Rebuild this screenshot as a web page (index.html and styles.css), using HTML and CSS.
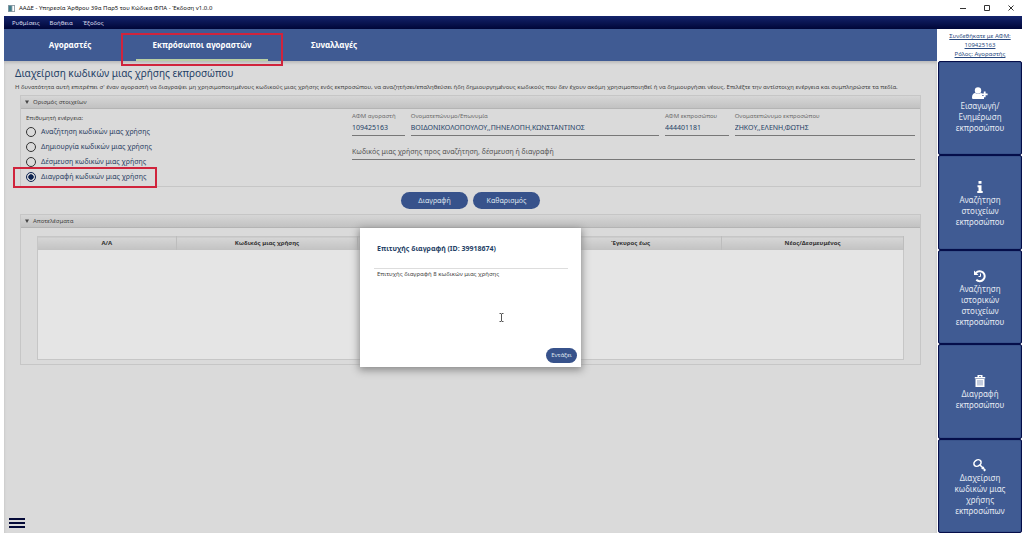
FILE: index.html
```html
<!DOCTYPE html>
<html lang="el">
<head>
<meta charset="utf-8">
<meta name="viewport" content="width=device-width, initial-scale=1">
<title>ΑΑΔΕ - Υπηρεσία Άρθρου 39α Παρ5 του Κώδικα ΦΠΑ</title>
<link rel="stylesheet" href="styles.css">
</head>
<body>
<div class="window">
  <header class="titlebar">
    <svg class="app-icon" viewBox="0 0 8 8" aria-hidden="true"><path fill="#8a9aa4" d="M0 0h8v8H0z"/><path fill="#fff" d="M5 1h2v6H5z"/><path fill="#3f7f8c" d="M1 1h3v6H1z"/></svg>
    <span class="window-title">ΑΑΔΕ - Υπηρεσία Άρθρου 39α Παρ5 του Κώδικα ΦΠΑ - Έκδοση v1.0.0</span>
    <div class="window-controls">
      <button class="window-button" aria-label="Ελαχιστοποίηση"><svg viewBox="0 0 6 6"><path d="M0 3.5h6"/></svg></button>
      <button class="window-button" aria-label="Μεγιστοποίηση"><svg viewBox="0 0 6 6"><path d="M.5.5h5v5h-5z"/></svg></button>
      <button class="window-button" aria-label="Κλείσιμο"><svg viewBox="0 0 6 6"><path d="M.5.5l5 5m0-5l-5 5"/></svg></button>
    </div>
  </header>
  <nav class="menubar">
    <button class="menu-item">Ρυθμίσεις</button>
    <button class="menu-item">Βοήθεια</button>
    <button class="menu-item">Έξοδος</button>
  </nav>
  <div class="workspace">
    <div class="content">
      <nav class="tabs">
        <button class="tab">Αγοραστές</button>
        <button class="tab tab-active">Εκπρόσωποι αγοραστών<span class="highlight highlight-tab"></span></button>
        <button class="tab">Συναλλαγές</button>
      </nav>
      <main class="page">
        <h1 class="page-title">Διαχείριση κωδικών μιας χρήσης εκπροσώπου</h1>
        <p class="page-intro">Η δυνατότητα αυτή επιτρέπει σ' έναν αγοραστή να διαγραψει μη χρησιμοποιημένους κωδικούς μιας χρήσης ενός εκπροσώπου, να αναζητήσει/επαληθεύσει ήδη δημιουργημένους κωδικούς που δεν έχουν ακόμη χρησιμοποιηθεί ή να δημιουργήσει νέους. Επιλέξτε την αντίστοιχη ενέργεια και συμπληρώστε τα πεδία.</p>
        <section class="panel">
          <h2 class="panel-title"><svg class="caret" viewBox="0 0 4 4" aria-hidden="true"><path d="M0 .5h4L2 4z"/></svg>Ορισμός στοιχείων</h2>
          <form class="criteria">
            <fieldset class="actions">
              <legend class="actions-title">Επιθυμητή ενέργεια:</legend>
              <label class="option"><input class="radio" type="radio" name="action">Αναζήτηση κωδικών μιας χρήσης</label>
              <label class="option"><input class="radio" type="radio" name="action">Δημιουργία κωδικών μιας χρήσης</label>
              <label class="option"><input class="radio" type="radio" name="action">Δέσμευση κωδικών μιας χρήσης</label>
              <label class="option"><input class="radio" type="radio" name="action" checked>Διαγραφή κωδικών μιας χρήσης<span class="highlight highlight-option"></span></label>
            </fieldset>
            <div class="fields">
              <label class="field">ΑΦΜ αγοραστή<input class="field-input" type="text" value="109425163"></label>
              <label class="field">Ονοματεπώνυμο/Επωνυμία<input class="field-input" type="text" value="ΒΟΙΔΟΝΙΚΟΛΟΠΟΥΛΟΥ,,ΠΗΝΕΛΟΠΗ,ΚΩΝΣΤΑΝΤΙΝΟΣ"></label>
              <label class="field">ΑΦΜ εκπροσώπου<input class="field-input" type="text" value="444401181"></label>
              <label class="field">Ονοματεπώνυμο εκπροσώπου<input class="field-input" type="text" value="ΖΗΚΟΥ,,ΕΛΕΝΗ,ΦΩΤΗΣ"></label>
              <input class="field-input field-code" type="text" placeholder="Κωδικός μιας χρήσης προς αναζήτηση, δέσμευση ή διαγραφή" aria-label="Κωδικός μιας χρήσης">
            </div>
          </form>
        </section>
        <div class="commands">
          <button class="pill">Διαγραφή</button>
          <button class="pill">Καθαρισμός</button>
        </div>
        <section class="panel">
          <h2 class="panel-title"><svg class="caret" viewBox="0 0 4 4" aria-hidden="true"><path d="M0 .5h4L2 4z"/></svg>Αποτελέσματα</h2>
          <div class="results">
            <table class="results-table">
              <thead><tr><th class="col-index">Α/Α</th><th>Κωδικός μιας χρήσης</th><th></th><th>Έγκυρος έως</th><th>Νέος/Δεσμευμένος</th></tr></thead>
              <tbody><tr><td colspan="5"></td></tr></tbody>
            </table>
          </div>
        </section>
        <button class="drawer-toggle" aria-label="Μενού"><svg viewBox="0 0 16 12"><path d="M0 2h16M0 6h16M0 10h16"/></svg></button>
        <div class="dialog" role="dialog" aria-labelledby="dialog-title">
          <h2 class="dialog-title" id="dialog-title">Επιτυχής διαγραφή (ID: 39918674)</h2>
          <p class="dialog-text">Επιτυχής διαγραφή 8 κωδικών μιας χρήσης</p>
          <svg class="text-cursor" viewBox="0 0 5 9" aria-hidden="true"><path d="M.5.5h1.500l.5.5.5-.5h1.500M2.500 1v7M.5 8.500h1.500l.5-.5.5.5h1.500"/></svg>
          <button class="pill dialog-ok">Εντάξει</button>
        </div>
      </main>
    </div>
    <aside class="sidebar">
      <a class="account" href="#account">Συνδεθήκατε με ΑΦΜ: 109425163<br>Ρόλος: Αγοραστής</a>
      <button class="side-button"><svg class="side-icon" viewBox="0 0 16 14"><circle cx="6" cy="4.500" r="3.200"/><path d="M0 11.500c0-3 1.500-4.500 3.200-4.500 1.800 1.400 3.800 1.400 5.600 0 .5 0 1 .2 1.200.5v2.500h2V13H1.500C.5 13 0 12.500 0 11.500z"/><path d="M11.800 5.500h1.800v2h2v1.800h-2v2h-1.800v-2h-2V7.500h2z"/></svg>Εισαγωγή/ Ενημέρωση εκπροσώπου</button>
      <button class="side-button"><svg class="side-icon" viewBox="0 0 16 14"><path d="M6.500 1h3v2.700h-3zM5.500 5.300h4v5.700h1.200v2H5.300v-2h1.200V7.300h-1z"/></svg>Αναζήτηση στοιχείων εκπροσώπου</button>
      <button class="side-button"><svg class="side-icon" viewBox="0 0 16 14"><path class="line" d="M4 3.800A5 5 0 1 1 4.300 10.800"/><path d="M2 1.500v4.500h4.500z"/><path class="line thin" d="M8.500 4.500v3H6.500"/></svg>Αναζήτηση ιστορικών στοιχείων εκπροσώπου</button>
      <button class="side-button"><svg class="side-icon" viewBox="0 0 16 14"><path d="M5.500 3V1h5v2h2.700v1.500H2.800V3zM7 3h2v-.8H7zM3.500 5h9v8h-9z"/><path class="slots" d="M6 6v5.500M8 6v5.500M10 6v5.500"/></svg>Διαγραφή εκπροσώπου</button>
      <button class="side-button"><svg class="side-icon" viewBox="0 0 16 14"><ellipse class="line key" cx="5.500" cy="5" rx="3.800" ry="3" transform="rotate(-35 5.500 5)"/><path class="line key" d="M8 7l5.500 5.500M9.800 11l2-2M11.900 13l1.500-1.500"/></svg>Διαχείριση κωδικών μιας χρήσης εκπροσώπων</button>
    </aside>
  </div>
</div>
</body>
</html>
```
FILE: styles.css
```css
* {
  box-sizing: border-box;
}

body {
  margin: 0;
  background: #fff;
  color: #444;
  font-family: "Noto Sans", "Open Sans", sans-serif;
  font-size: 6px;
  line-height: 10px;
}

button,
input {
  padding: 0;
  border: 0;
  background: none;
  color: inherit;
  font: inherit;
}

h1,
h2,
p {
  margin: 0;
}

.window {
  display: flex;
  flex-direction: column;
  min-height: 100vh;
  padding: 0 1px 0 4px;
}

.titlebar {
  display: flex;
  align-items: center;
  height: 16px;
  padding: 0 8px 0 4px;
  color: #111;
}

.app-icon {
  width: 7px;
  height: 7px;
  margin-right: 4px;
}

.window-controls {
  display: flex;
  gap: 18px;
  margin-left: auto;
}

.window-button {
  display: flex;
  width: 6px;
}

.window-button svg {
  width: 6px;
  height: 6px;
  fill: none;
  stroke: #333;
  stroke-width: 1;
}

.menubar {
  display: flex;
  gap: 10px;
  height: 13px;
  padding-left: 8px;
  background: linear-gradient(#14246c, #000638);
  color: #dde;
}

.workspace {
  display: flex;
  flex: 1;
}

.content {
  display: flex;
  flex: 1;
  flex-direction: column;
  min-width: 0;
}

.tabs {
  display: flex;
  height: 32px;
  background: #405b93;
}

.tab {
  position: relative;
  width: 132px;
  padding-top: 2px;
  border-bottom: 2px solid transparent;
  color: #fff;
  font-size: 8px;
  font-weight: 700;
}

.tab-active {
  border-bottom-color: #b9cfa4;
}

.highlight {
  position: absolute;
  border: 2px solid #d0243c;
  pointer-events: none;
}

.highlight-tab {
  inset: 4px -15px -7px;
  z-index: 1;
}

.page {
  position: relative;
  display: flex;
  flex: 1;
  flex-direction: column;
  padding: 4px 16px 4px 11px;
  background: #dadada;
  box-shadow: inset 0 2px 3px #bbb;
}

.page-title {
  color: #1f3f66;
  font-size: 10px;
  font-weight: 400;
  line-height: 16px;
}

.page-intro {
  margin-bottom: 2px;
  line-height: 12px;
  white-space: nowrap;
}

.panel {
  margin-left: 5px;
  border: 1px solid #c6c6c6;
}

.panel-title {
  display: flex;
  align-items: center;
  gap: 4px;
  height: 13px;
  padding-left: 4px;
  border-bottom: 1px solid #b4b4b4;
  background: linear-gradient(#d6d6d6, #c2c2c2);
  font-size: 6px;
  font-weight: 400;
}

.caret {
  width: 4px;
  height: 4px;
  fill: #444;
}

.criteria {
  display: grid;
  grid-template-columns: 326fr 563fr;
  padding: 2px 5px 2px 5px;
}

.actions {
  margin: 0;
  padding: 1px 0 0;
  border: 0;
}

.actions-title {
  float: left;
  width: 100%;
  padding: 0;
  line-height: 12px;
}

.option {
  position: relative;
  display: flex;
  clear: both;
  align-items: center;
  gap: 5px;
  width: max-content;
  height: 15px;
  color: #2b4163;
  font-size: 7px;
}

.radio {
  width: 10px;
  height: 10px;
  margin: 0;
  border: 1px solid #333;
  border-radius: 50%;
  appearance: none;
}

.radio:checked {
  border-color: #0d2350;
  background: radial-gradient(circle closest-side, #0d2350 60%, transparent 75%);
}

.highlight-option {
  inset: -2px -11px -4px -13px;
}

.fields {
  display: grid;
  grid-template-columns: 53fr 249fr 64fr 181fr;
  gap: 9px 6px;
  align-content: start;
}

.field {
  display: flex;
  flex-direction: column;
  min-width: 0;
  color: #6c6c6c;
}

.field-input {
  width: 100%;
  height: 15px;
  padding-bottom: 1px;
  border-bottom: 1px solid #777;
  color: #1f3f66;
  font-size: 7px;
}

.field-code {
  grid-column: 1 / -1;
}

.field-code::placeholder {
  color: #555;
  opacity: 1;
}

.commands {
  display: flex;
  justify-content: center;
  gap: 5px;
  padding: 5px 0 5px 5px;
}

.pill {
  width: 67px;
  height: 17px;
  border-radius: 9px;
  background: #37528b;
  color: #dfe4ee;
  font-size: 7px;
}

.results {
  padding: 8px 16px 4px;
}

.results-table {
  width: 100%;
  border: 1px solid #c6c6c6;
  border-collapse: collapse;
  table-layout: fixed;
  background: #e5e5e5;
}

.results-table th {
  height: 13px;
  padding: 0;
  border-right: 1px solid #bdbdbd;
  background: linear-gradient(#d6d6d6, #c2c2c2);
  color: #333;
}

.results-table td {
  height: 110px;
  padding: 0;
}

.results-table .col-index {
  width: 16%;
}

.drawer-toggle {
  align-self: flex-start;
  width: 16px;
  height: 12px;
  margin: auto 0 0 -6px;
}

.drawer-toggle svg {
  display: block;
  width: 16px;
  height: 12px;
  stroke: #050a38;
  stroke-width: 2;
}

.dialog {
  position: absolute;
  inset: 0;
  display: flex;
  flex-direction: column;
  width: 221px;
  height: 139px;
  margin: auto;
  padding: 14px 4px 4px 14px;
  background: #fff;
  box-shadow: 0 2px 8px 1px #888;
}

.dialog-title {
  margin-right: 9px;
  padding: 2px 3px 14px;
  border-bottom: 1px solid #ddd;
  color: #1f3f66;
  font-size: 7px;
}

.dialog-text {
  padding-left: 3px;
}

.text-cursor {
  position: absolute;
  top: 85px;
  left: 139px;
  width: 5px;
  height: 9px;
  fill: none;
  stroke: #555;
}

.dialog-ok {
  align-self: flex-end;
  width: 31px;
  height: 15px;
  margin-top: auto;
  font-size: 6px;
}

.sidebar {
  display: flex;
  flex-direction: column;
  width: 85px;
  border-left: 1px solid #fff;
}

.account {
  height: 32px;
  padding: 3px 8px 0;
  color: #2a4a80;
  line-height: 9px;
  text-align: center;
}

.side-button {
  display: flex;
  flex: 1;
  flex-direction: column;
  align-items: center;
  justify-content: center;
  padding: 2px 14px 0;
  border: 1px solid #050e4a;
  border-radius: 2px;
  background: #405b93;
  box-shadow: inset 0 0 1px #050e4a;
  color: #e4e9f2;
  font-size: 8px;
  line-height: 11px;
}

.side-icon {
  width: 16px;
  height: 14px;
  fill: #fff;
}

.line {
  fill: none;
  stroke: #fff;
  stroke-width: 2;
}

.thin {
  stroke-width: 1;
}

.key {
  stroke-width: 1.6;
}

.slots {
  stroke: #8799bd;
  stroke-width: 1;
}
```
